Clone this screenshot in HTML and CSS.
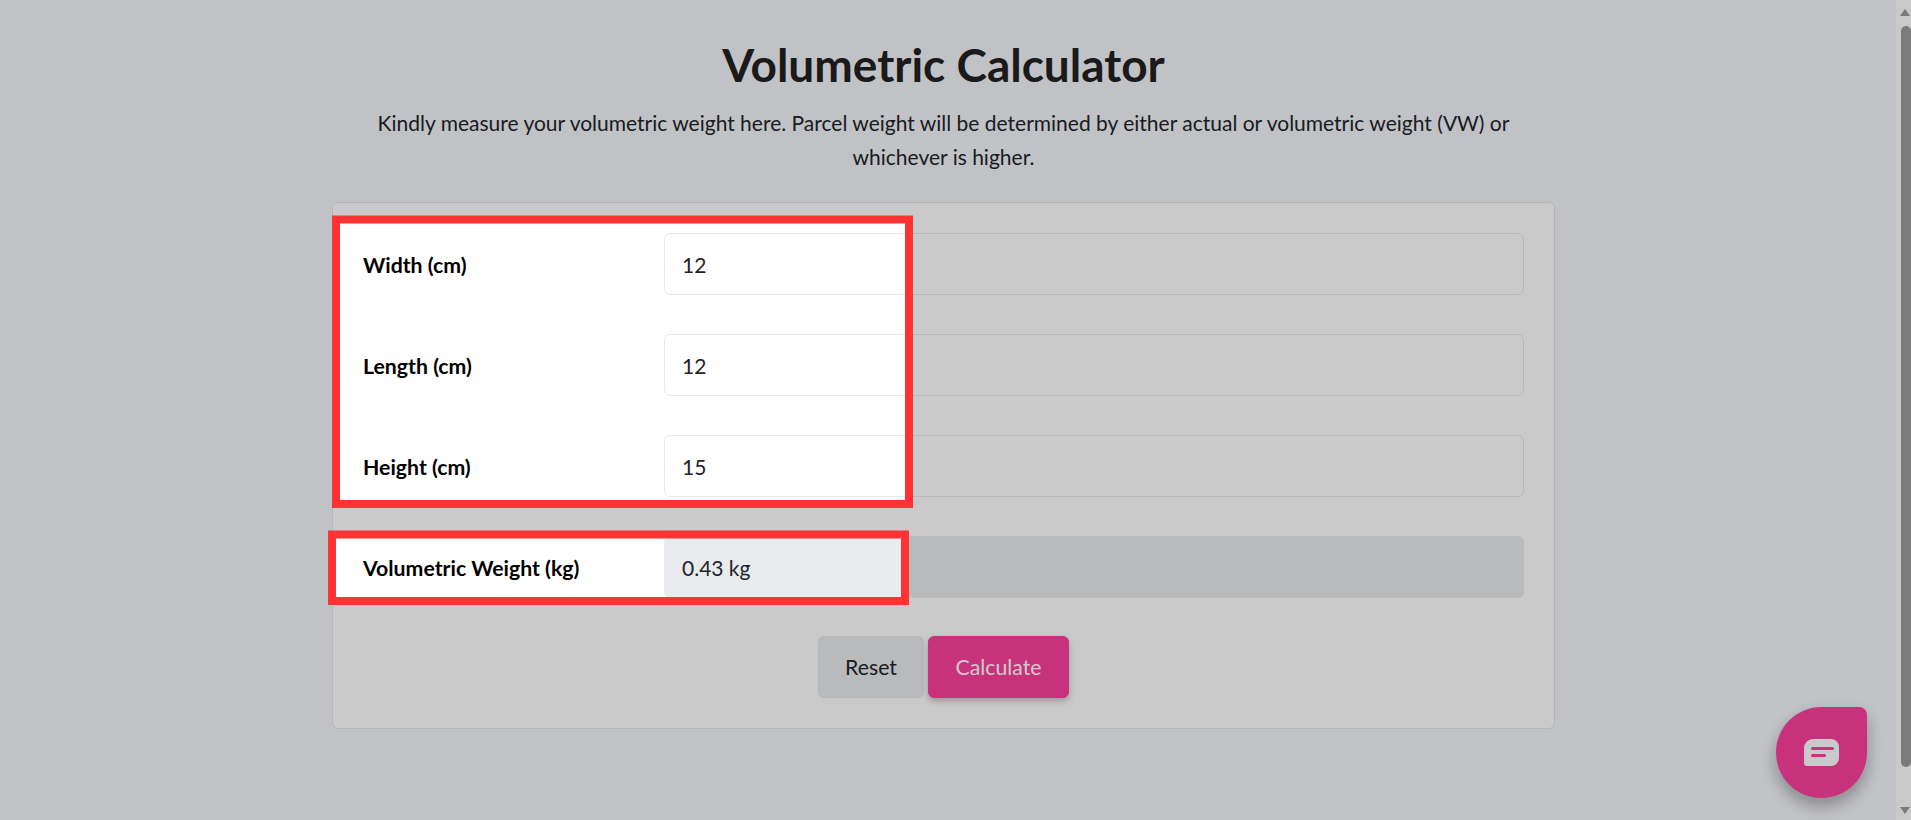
FILE: index.html
```html
<!DOCTYPE html>
<html lang="en">
<head>
    <meta charset="UTF-8">
    <meta name="viewport" content="width=device-width, initial-scale=1.0">
    <title>Volumetric Calculator</title>
    <link rel="stylesheet" href="styles.css">
</head>
<body>
    <div class="page">
        <h1>Volumetric Calculator</h1>
        <p class="intro">Kindly measure your volumetric weight here. Parcel weight will be determined by either actual or volumetric weight (VW) or whichever is higher.</p>

        <form class="card">
            <div class="row">
                <label class="label" for="width">Width (cm)</label>
                <input type="text" id="width" class="input" value="12">
            </div>
            <div class="row">
                <label class="label" for="length">Length (cm)</label>
                <input type="text" id="length" class="input" value="12">
            </div>
            <div class="row">
                <label class="label" for="height">Height (cm)</label>
                <input type="text" id="height" class="input" value="15">
            </div>
            <div class="row">
                <label class="label" for="weight">Volumetric Weight (kg)</label>
                <input type="text" id="weight" class="input readonly" value="0.43 kg" readonly>
            </div>
            <div class="actions">
                <button type="button" class="btn btn-reset">Reset</button>
                <button type="button" class="btn btn-calc">Calculate</button>
            </div>
        </form>
    </div>

    <button type="button" class="chat" aria-label="Chat">
        <svg width="35" height="27" viewBox="0 0 35 27">
            <path d="M9 0H27A8 8 0 0 1 35 8V19A8 8 0 0 1 27 27H3A3 3 0 0 1 0 24V9A9 9 0 0 1 9 0Z" fill="#fff"/>
            <rect x="7" y="8" width="23" height="3" rx="1.5" class="chat-line"/>
            <rect x="7" y="15" width="15" height="3" rx="1.5" class="chat-line"/>
        </svg>
    </button>

    <!-- dimmed layer with two holes, red boxes on top -->
    <svg class="annotations" width="1911" height="820" viewBox="0 0 1911 820">
        <path class="dim" fill-rule="evenodd" d="M0 0H1911V820H0Z M340 223H905V500H340Z M336 538H901V597H336Z"/>
        <rect class="mark" x="336" y="219.5" width="573" height="284.5"/>
        <rect class="mark" x="332" y="534.5" width="573" height="66.5"/>
    </svg>

    <div class="scrollbar">
        <span class="arrow-up"></span>
        <span class="thumb"></span>
        <span class="arrow-down"></span>
    </div>
</body>
</html>
```

FILE: styles.css
```css
* {
    box-sizing: border-box;
}

html, body {
    height: 100%;
}

body {
    font-family: 'Lato', sans-serif;
    margin: 0;
    height: 820px;
    overflow: hidden;
    background: #f4f5fa;
    color: #212529;
    display: flex;
}

.page {
    width: 1887px;
    flex: none;
    display: flex;
    flex-direction: column;
    align-items: center;
    padding-top: 38px;
}

h1 {
    font-size: 46px;
    line-height: 54px;
    font-weight: 700;
    color: #222;
    margin: 0 0 14px;
}

.intro {
    width: 1160px;
    margin: 0 0 29px;
    font-size: 21px;
    line-height: 33.6px;
    text-align: center;
}

.card {
    width: 1223px;
    background: #fff;
    border: 1px solid #e6e6ea;
    border-radius: 6px;
    padding: 30px 30px 30px;
}

.row {
    display: grid;
    grid-template-columns: 301px 1fr;
    align-items: center;
    margin-bottom: 39px;
}

.row:nth-child(4) {
    margin-bottom: 38px;
}

.label {
    padding-top: 2px;
    font-size: 21.28px;
    font-weight: 700;
    color: #000;
}

.input {
    width: 100%;
    height: 62px;
    padding: 0 17px;
    border: 1px solid #e8e9f0;
    border-radius: 6px;
    background: #fff;
    color: #212529;
    font-family: inherit;
    font-size: 21px;
    outline: none;
}

.readonly {
    background: #e9ebee;
    border-color: #e9ebee;
}

.actions {
    display: flex;
    justify-content: center;
    gap: 4px;
}

.btn {
    height: 62px;
    border-radius: 6px;
    font-family: inherit;
    font-size: 21.28px;
    cursor: pointer;
}

.btn-reset {
    width: 106px;
    background: #e9ebee;
    border: 1px solid #e6e8ec;
    color: #212529;
}

.btn-calc {
    width: 141px;
    background: #fd409d;
    border: 1px solid #fd409d;
    color: #fff;
    box-shadow: 0 3px 6px rgba(0, 0, 0, 0.25);
}

.chat {
    position: fixed;
    left: 1776px;
    top: 707px;
    width: 91px;
    height: 91px;
    padding: 0;
    border: none;
    border-radius: 50% 8px 50% 50%;
    background: #fd409d;
    box-shadow: 0 8px 16px rgba(0, 0, 0, 0.3);
    display: flex;
    align-items: center;
    justify-content: center;
}

.chat-line {
    fill: #fd409d;
}

.annotations {
    position: fixed;
    left: 0;
    top: 0;
}

.dim {
    fill: rgba(0, 0, 0, 0.208);
}

.mark {
    fill: none;
    stroke: #ff3333;
    stroke-width: 8;
}

.scrollbar {
    position: fixed;
    left: 1896px;
    top: 0;
    width: 15px;
    height: 820px;
    background: #c9c9c9;
    display: flex;
    flex-direction: column;
    align-items: flex-end;
}

.arrow-up, .arrow-down {
    width: 0;
    height: 0;
    margin-right: 1px;
    border-left: 5px solid transparent;
    border-right: 5px solid transparent;
}

.arrow-up {
    margin-top: 9px;
    border-bottom: 7px solid #7b7b7b;
}

.arrow-down {
    margin-top: 40px;
    border-top: 7px solid #7b7b7b;
}

.thumb {
    width: 10px;
    height: 741px;
    margin-top: 10px;
    background: #7b7b7b;
    border-radius: 5px;
}
```
